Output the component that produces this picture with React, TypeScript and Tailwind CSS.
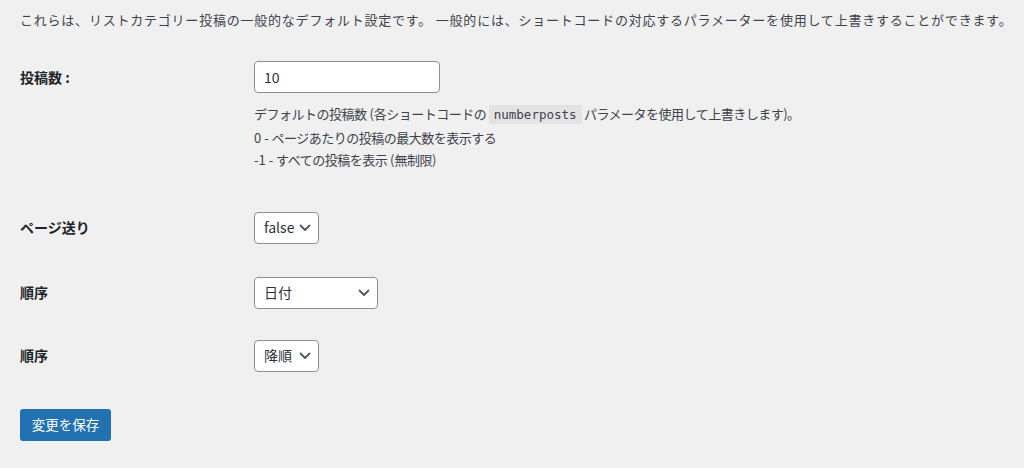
import React from "react";

const font = { fontFamily: '"Noto Sans CJK JP", "Noto Sans", sans-serif' };

function Chevron() {
  return (
    <svg width="12" height="8" viewBox="0 0 12 8" fill="none" className="shrink-0">
      <path d="M1.5 1.5L6 6L10.5 1.5" stroke="#50575e" strokeWidth="1.8" strokeLinecap="round" strokeLinejoin="round" />
    </svg>
  );
}

function Select({ value, width }: { value: string; width: string }) {
  return (
    <div className={`flex h-8 items-center justify-between rounded-[4px] border border-[#8c8f94] bg-white pl-[9px] pr-[7px] text-[14px] text-[#2c3338] ${width}`}>
      <span>{value}</span>
      <Chevron />
    </div>
  );
}

function Label({ children }: { children: React.ReactNode }) {
  return (
    <div className="flex h-8 w-[234px] shrink-0 items-center text-[14px] font-bold text-[#1d2327]">{children}</div>
  );
}

export default function App() {
  return (
    <div className="h-[468px] w-full bg-[#f0f0f1] px-5 text-[#3c434a]" style={font}>
      <p className="pt-[10px] text-[13px] leading-[20px] tracking-[0.78px] whitespace-nowrap">
        これらは、リストカテゴリー投稿の一般的なデフォルト設定です。 一般的には、ショートコードの対応するパラメーターを使用して上書きすることができます。
      </p>
      <div className="mt-[31px] flex">
        <Label>投稿数 :</Label>
        <div>
          <div className="flex h-8 w-[186px] items-center rounded-[4px] border border-[#8c8f94] bg-white px-[9px] text-[14px] text-[#2c3338]">
            10
          </div>
          <div className="mt-[10px] text-[13px] leading-[22.5px] tracking-[-0.5px] text-[#3c434a]">
            <p>
              デフォルトの投稿数<span className="tracking-normal"> (</span>各ショートコードの{" "}
              <code className="bg-[#e3e3e4] px-[5px] py-[2px] text-[12.5px] tracking-normal" style={{ fontFamily: '"DejaVu Sans Mono", monospace' }}>
                numberposts
              </code>{" "}
              パラメータを使用して上書きします)。
            </p>
            <p>
              <span className="tracking-normal">0 - </span>ページあたりの投稿の最大数を表示する
            </p>
            <p>
              <span className="tracking-normal">-1 - </span>すべての投稿を表示<span className="tracking-normal"> (</span>無制限)
            </p>
          </div>
        </div>
      </div>
      <div className="mt-[40px] flex">
        <Label>ページ送り</Label>
        <Select value="false" width="w-[65px]" />
      </div>
      <div className="mt-[33px] flex">
        <Label>順序</Label>
        <Select value="日付" width="w-[124px]" />
      </div>
      <div className="mt-[31px] flex">
        <Label>順序</Label>
        <Select value="降順" width="w-[65px]" />
      </div>
      <button className="mt-[37px] flex h-8 w-[91px] items-center justify-center rounded-[3px] bg-[#2271b1] text-[13.5px] text-white">
        変更を保存
      </button>
    </div>
  );
}
